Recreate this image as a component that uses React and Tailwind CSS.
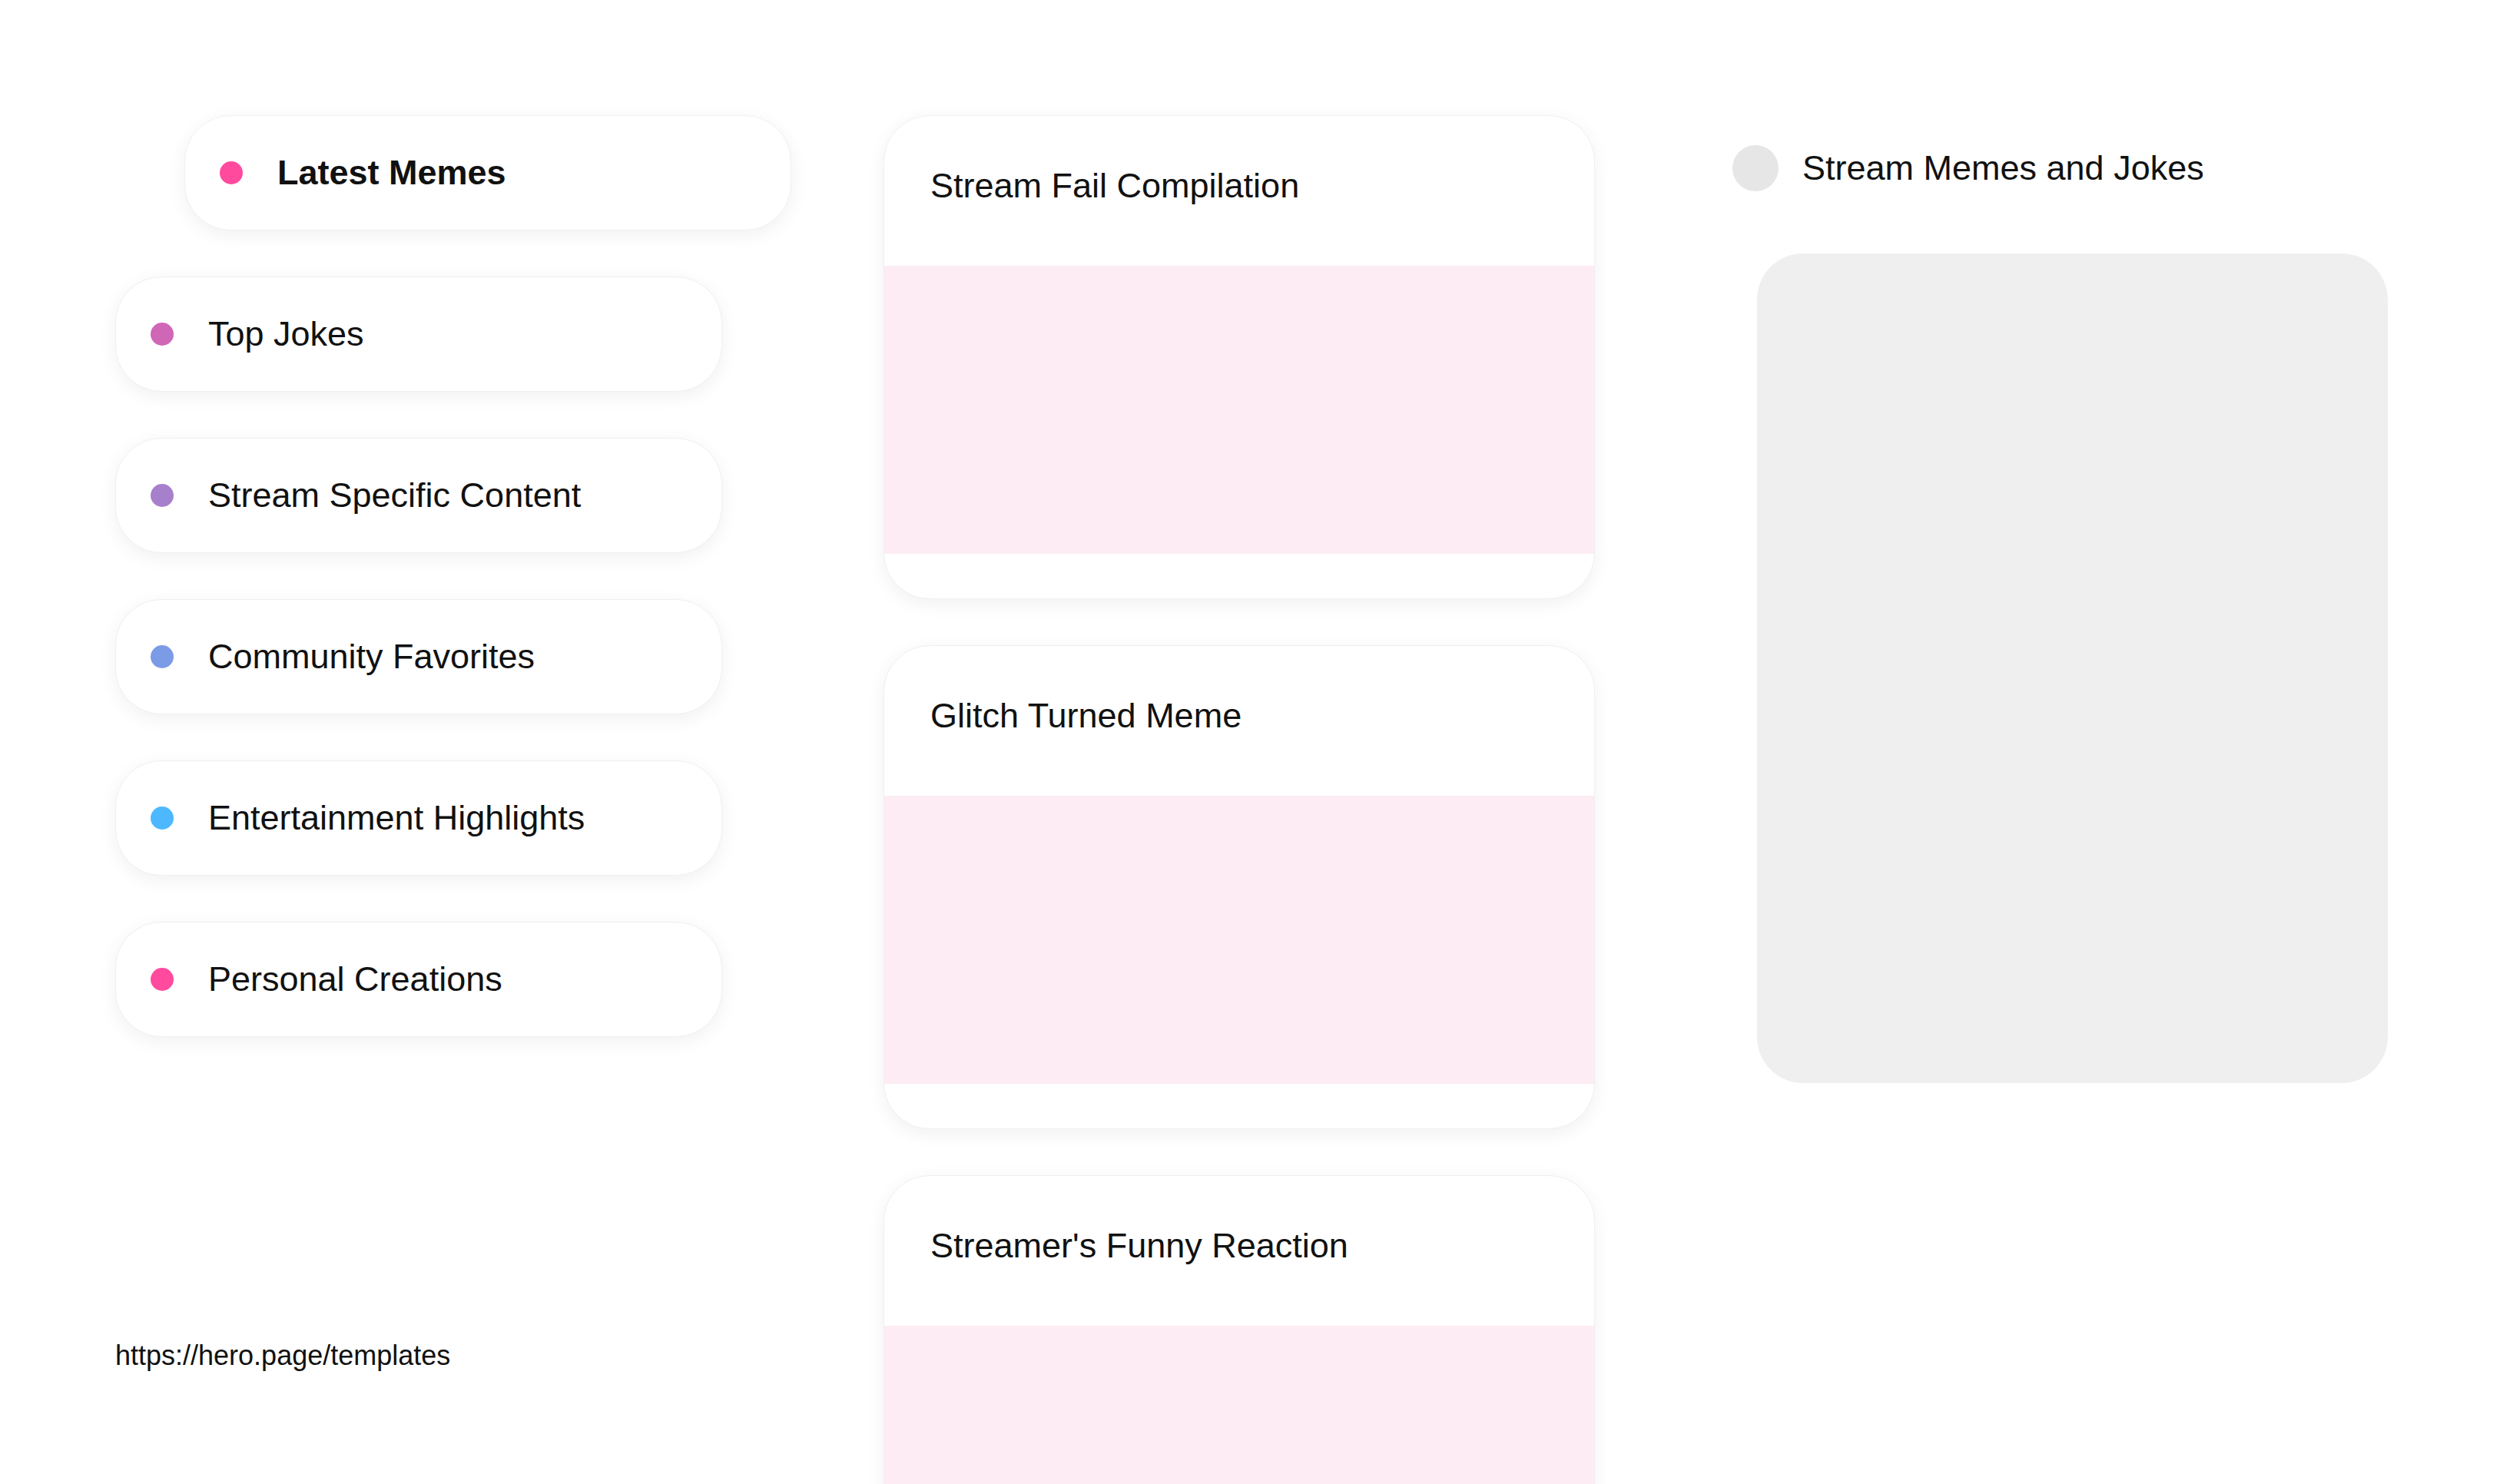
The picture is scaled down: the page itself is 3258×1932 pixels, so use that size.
const categories = [
  { label: 'Latest Memes', color: 'bg-[#ff4a9e]', active: true },
  { label: 'Top Jokes', color: 'bg-[#d066b6]' },
  { label: 'Stream Specific Content', color: 'bg-[#a680cc]' },
  { label: 'Community Favorites', color: 'bg-[#7b9be6]' },
  { label: 'Entertainment Highlights', color: 'bg-[#4db8ff]' },
  { label: 'Personal Creations', color: 'bg-[#ff4a9e]' },
];

const posts = ['Stream Fail Compilation', 'Glitch Turned Meme', "Streamer's Funny Reaction"];

const CategoryPill = ({ label, color, active }) => (
  <div
    className={`flex h-[150px] w-[790px] items-center gap-[45px] rounded-[60px] border border-[#f0f0f0] bg-white pl-[45px] shadow-[0_6px_24px_rgba(0,0,0,0.06)] ${
      active ? 'ml-[90px] font-bold' : ''
    }`}
  >
    <span className={`h-[30px] w-[30px] shrink-0 rounded-full ${color}`} />
    <span className="text-[45px] leading-[1.2] text-[#111]">{label}</span>
  </div>
);

const PostCard = ({ title }) => (
  <div className="flex h-[630px] w-[926px] shrink-0 flex-col overflow-hidden rounded-[60px] border border-[#f0f0f0] bg-white shadow-[0_6px_24px_rgba(0,0,0,0.06)]">
    <div className="h-[195px] shrink-0 px-[60px] pt-[64px]">
      <h3 className="text-[45px] leading-[1.2] text-[#111]">{title}</h3>
    </div>
    <div className="h-[375px] shrink-0 bg-[#fdecf4]" />
  </div>
);

export default function App() {
  return (
    <div
      className="flex h-[1932px] w-full overflow-hidden bg-white px-[150px] pt-[150px]"
      style={{ fontFamily: '"Liberation Sans", Arial, sans-serif' }}
    >
      {/* Categories */}
      <div className="flex w-[880px] shrink-0 flex-col">
        <div className="flex flex-col gap-[60px]">
          {categories.map((c) => (
            <CategoryPill key={c.label} {...c} />
          ))}
        </div>
        <p className="mt-[394px] text-[36px] leading-[1.15] text-[#111]">https://hero.page/templates</p>
      </div>

      {/* Posts */}
      <div className="ml-[120px] flex w-[926px] shrink-0 flex-col gap-[60px]">
        {posts.map((p) => (
          <PostCard key={p} title={p} />
        ))}
      </div>

      {/* Preview */}
      <div className="ml-[179px] flex w-[853px] shrink-0 flex-col">
        <div className="mt-[39px] flex h-[60px] items-center gap-[31px]">
          <span className="h-[60px] w-[60px] shrink-0 rounded-full bg-[#e6e6e6]" />
          <span className="text-[45px] leading-[1.2] text-[#111]">Stream Memes and Jokes</span>
        </div>
        <div className="ml-[32px] mt-[81px] h-[1080px] w-[821px] rounded-[60px] bg-[#efefef]" />
      </div>
    </div>
  );
}
